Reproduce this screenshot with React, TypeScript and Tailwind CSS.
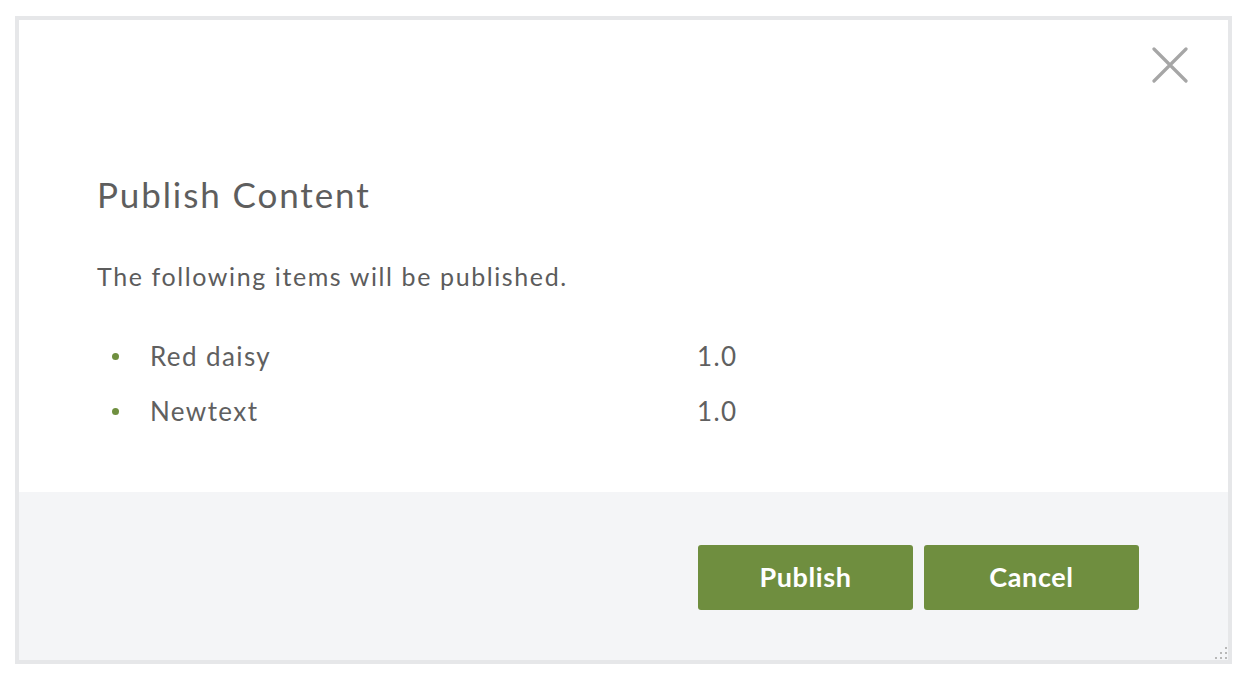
import React from "react";

export default function App() {
  const items = [
    { name: "Red daisy", version: "1.0" },
    { name: "Newtext", version: "1.0" },
  ];
  return (
    <div className="w-[1248px] h-[680px] bg-white pt-[16px] pl-[15px]" style={{ fontFamily: "Lato, 'Open Sans', sans-serif" }}>
      <div className="relative w-[1217px] h-[648px] border-4 border-[#e6e7e9] flex flex-col bg-white">
        <button className="absolute right-[38px] top-[25px] w-[40px] h-[40px] flex items-center justify-center">
          <svg width="36" height="36" viewBox="0 0 36 36">
            <path d="M2 2 L34 34 M34 2 L2 34" stroke="#a6a6a6" strokeWidth="3.2" strokeLinecap="round" />
          </svg>
        </button>
        <div className="h-[472px] pl-[78px] pt-[152px]">
          <h2 className="text-[35px] leading-[44px] text-[#5e5e5e] font-normal tracking-[1.9px]">Publish Content</h2>
          <p className="mt-[44px] text-[25px] leading-[32px] text-[#5c5c5c] tracking-[1.6px]">The following items will be published.</p>
          <ul className="mt-[48px] flex flex-col gap-[23px]">
            {items.map((it) => (
              <li key={it.name} className="flex items-center text-[26px] leading-[32px] text-[#606060] tracking-[1.4px]">
                <span className="w-[7px] h-[7px] rounded-full bg-[#6f8f3f] ml-[15px] mr-[31px]" />
                <span className="w-[547px]">{it.name}</span>
                <span>{it.version}</span>
              </li>
            ))}
          </ul>
        </div>
        <div className="flex-1 bg-[#f4f5f7] flex justify-end items-start pt-[53px] pr-[89px] gap-[11px] relative">
          <button className="w-[215px] h-[65px] rounded-[3px] bg-[#6f8e3f] text-white text-[27px] font-bold tracking-[0.6px]">Publish</button>
          <button className="w-[215px] h-[65px] rounded-[3px] bg-[#6f8e3f] text-white text-[27px] font-bold tracking-[0.6px]">Cancel</button>
          <svg className="absolute right-[0px] bottom-[0px]" width="18" height="18" viewBox="0 0 18 18">
            <g fill="#b8b8b8">
              <rect x="15" y="5" width="2" height="2" />
              <rect x="10" y="10" width="2" height="2" />
              <rect x="15" y="10" width="2" height="2" />
              <rect x="5" y="15" width="2" height="2" />
              <rect x="10" y="15" width="2" height="2" />
              <rect x="15" y="15" width="2" height="2" />
            </g>
          </svg>
        </div>
      </div>
    </div>
  );
}
